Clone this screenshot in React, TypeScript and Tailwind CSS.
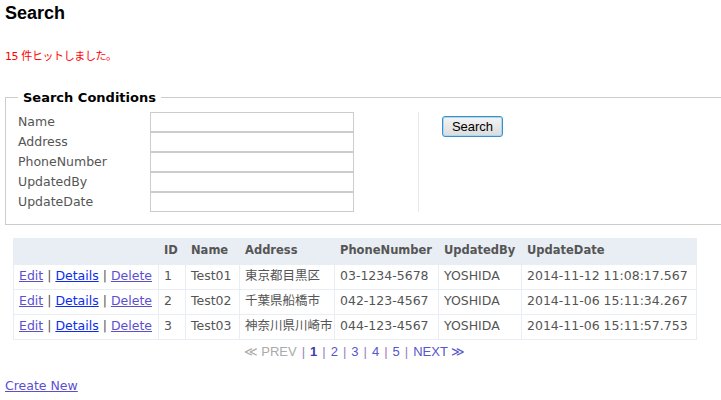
import React from 'react';

const rows = [
  { id: 1, name: 'Test01', address: '東京都目黒区', phone: '03-1234-5678', by: 'YOSHIDA', date: '2014-11-12 11:08:17.567' },
  { id: 2, name: 'Test02', address: '千葉県船橋市', phone: '042-123-4567', by: 'YOSHIDA', date: '2014-11-06 15:11:34.267' },
  { id: 3, name: 'Test03', address: '神奈川県川崎市', phone: '044-123-4567', by: 'YOSHIDA', date: '2014-11-06 15:11:57.753' },
];

const fields = ['Name', 'Address', 'PhoneNumber', 'UpdatedBy', 'UpdateDate'];

const font = "font-['Verdana','DejaVu_Sans','Noto_Sans_CJK_JP',sans-serif]";
const cell = 'px-[5px] border border-[#e8eef4] whitespace-nowrap overflow-hidden';
const head = `${cell} text-[11.5px]`;

export default function App() {
  return (
    <div className={`w-[721px] h-[400px] overflow-hidden bg-white text-[12.5px] text-[#555] ${font}`}>
      <h2 className="pl-[5px] pt-[3px] text-[18px] leading-[20px] font-bold text-black font-['Liberation_Sans',sans-serif]">
        Search
      </h2>

      <p className="pl-[5px] mt-[26px] text-[11px] tracking-[-0.4px] leading-[16px] text-[#ff0000] font-['DejaVu_Sans','Noto_Sans_CJK_JP',sans-serif]">
        15 件ヒットしました。
      </p>

      <fieldset className="ml-[5px] mt-[23px] w-[740px] border border-[#cccccc] px-[12px] pt-[4px] pb-[12px]">
        <legend className="px-[5px] font-bold text-black text-[13px]">Search Conditions</legend>
        <div className="flex">
          <div className="flex">
            <div className="w-[132px] flex flex-col">
              {fields.map((f) => (
                <div key={f} className="h-[20px] leading-[20px]">{f}</div>
              ))}
            </div>
            <div className="flex flex-col">
              {fields.map((f) => (
                <input key={f} className="w-[204px] h-[20px] border border-[#cccccc] bg-white" />
              ))}
            </div>
          </div>
          <div className="ml-[64px] w-px bg-[#e8e8e8]" />
          <div className="pl-[23px] pt-[4px]">
            <button className="w-[61px] h-[21px] rounded-[3px] border border-[#3c8fc7] bg-gradient-to-b from-[#f4f4f4] to-[#dcdcdc] text-[13px] leading-[17px] text-black font-['Liberation_Sans',sans-serif] shadow-[inset_0_0_0_1px_#a8d8f2]">
              Search
            </button>
          </div>
        </div>
      </fieldset>

      <table className="ml-[13px] mt-[13px] w-[683px] table-fixed border-collapse">
        <thead>
          <tr className="bg-[#e8eef4] h-[26px] text-left">
            <th className={`w-[145px] ${head}`}></th>
            <th className={`w-[27px] ${head}`}>ID</th>
            <th className={`w-[54px] ${head}`}>Name</th>
            <th className={`w-[95px] ${head}`}>Address</th>
            <th className={`w-[104px] ${head}`}>PhoneNumber</th>
            <th className={`w-[83px] ${head}`}>UpdatedBy</th>
            <th className={`w-[175px] ${head}`}>UpdateDate</th>
          </tr>
        </thead>
        <tbody>
          {rows.map((r) => (
            <tr key={r.id} className="h-[25px]">
              <td className={cell}>
                <a href="#" className="underline text-[#5b4fd0]">Edit</a> |{' '}
                <a href="#" className="underline text-[#0b2bef]">Details</a> |{' '}
                <a href="#" className="underline text-[#5b4fd0]">Delete</a>
              </td>
              <td className={cell}>{r.id}</td>
              <td className={cell}>{r.name}</td>
              <td className={cell}>{r.address}</td>
              <td className={cell}>{r.phone}</td>
              <td className={cell}>{r.by}</td>
              <td className={cell}>{r.date}</td>
            </tr>
          ))}
        </tbody>
      </table>

      <div className="w-[683px] ml-[13px] mt-[3px] flex justify-center gap-[5px] text-[13px] leading-[18px] text-[#5555cc] font-['Liberation_Sans',sans-serif]">
        <span className="text-[#aaaaaa]">≪ PREV</span>
        <span className="text-[#9a80c0]">|</span>
        <span className="font-bold text-[#3b3bb0]">1</span>
        <span className="text-[#9a80c0]">|</span>
        <a href="#">2</a>
        <span className="text-[#9a80c0]">|</span>
        <a href="#">3</a>
        <span className="text-[#9a80c0]">|</span>
        <a href="#">4</a>
        <span className="text-[#9a80c0]">|</span>
        <a href="#">5</a>
        <span className="text-[#9a80c0]">|</span>
        <a href="#">NEXT ≫</a>
      </div>

      <div className="pl-[5px] mt-[16px]">
        <a href="#" className="underline text-[#5b4fd0]">Create New</a>
      </div>
    </div>
  );
}
